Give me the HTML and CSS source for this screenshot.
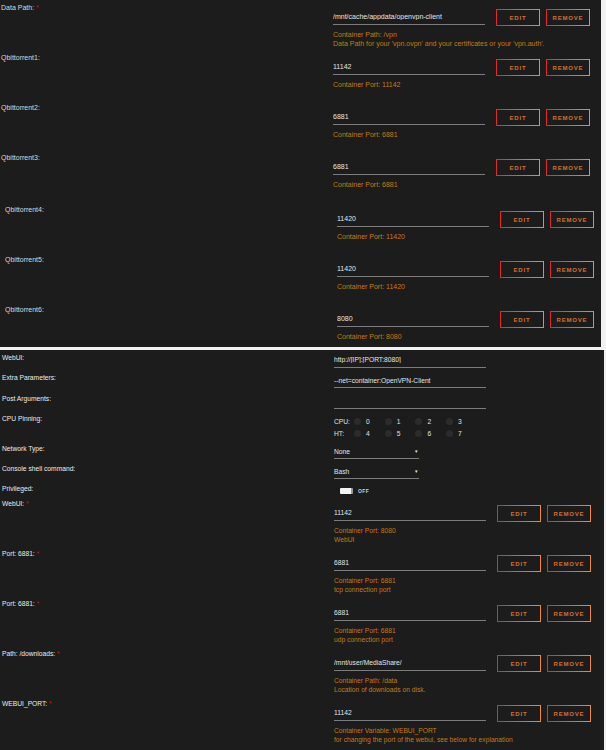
FILE: index.html
```html
<!DOCTYPE html>
<html lang="en">

<head>
    <meta charset="UTF-8">
    <meta name="viewport" content="width=device-width, initial-scale=1.0">
    <title>OpenVPN-Client</title>

    <link rel="stylesheet" href="styles.css">
</head>

<body>
    <!-- path and port mappings -->
    <section class="panel panel-top">
        <div class="row">
            <label class="label">Data Path: <span class="req">*</span></label>
            <div class="field">
                <div class="controls">
                    <input type="text" value="/mnt/cache/appdata/openvpn-client">
                    <button class="btn">EDIT</button>
                    <button class="btn">REMOVE</button>
                </div>
                <p class="desc">Container Path: /vpn<br>Data Path for your 'vpn.ovpn' and your certificates or your 'vpn.auth'.</p>
            </div>
        </div>
        <div class="row">
            <label class="label">Qbittorrent1:</label>
            <div class="field">
                <div class="controls">
                    <input type="text" value="11142">
                    <button class="btn">EDIT</button>
                    <button class="btn">REMOVE</button>
                </div>
                <p class="desc">Container Port: 11142</p>
            </div>
        </div>
        <div class="row">
            <label class="label">Qbittorrent2:</label>
            <div class="field">
                <div class="controls">
                    <input type="text" value="6881">
                    <button class="btn">EDIT</button>
                    <button class="btn">REMOVE</button>
                </div>
                <p class="desc">Container Port: 6881</p>
            </div>
        </div>
        <div class="row">
            <label class="label">Qbittorrent3:</label>
            <div class="field">
                <div class="controls">
                    <input type="text" value="6881">
                    <button class="btn">EDIT</button>
                    <button class="btn">REMOVE</button>
                </div>
                <p class="desc">Container Port: 6881</p>
            </div>
        </div>

        <div class="group">
            <div class="row">
                <label class="label">Qbittorrent4:</label>
                <div class="field">
                    <div class="controls">
                        <input type="text" value="11420">
                        <button class="btn">EDIT</button>
                        <button class="btn">REMOVE</button>
                    </div>
                    <p class="desc">Container Port: 11420</p>
                </div>
            </div>
            <div class="row">
                <label class="label">Qbittorrent5:</label>
                <div class="field">
                    <div class="controls">
                        <input type="text" value="11420">
                        <button class="btn">EDIT</button>
                        <button class="btn">REMOVE</button>
                    </div>
                    <p class="desc">Container Port: 11420</p>
                </div>
            </div>
            <div class="row">
                <label class="label">Qbittorrent6:</label>
                <div class="field">
                    <div class="controls">
                        <input type="text" value="8080">
                        <button class="btn">EDIT</button>
                        <button class="btn">REMOVE</button>
                    </div>
                    <p class="desc">Container Port: 8080</p>
                </div>
            </div>
        </div>
    </section>

    <!-- advanced settings -->
    <section class="panel panel-bottom">
        <div class="row-simple">
            <label class="label">WebUI:</label>
            <input type="text" value="http://[IP]:[PORT:8080]">
        </div>
        <div class="row-simple">
            <label class="label">Extra Parameters:</label>
            <input type="text" value="--net=container:OpenVPN-Client">
        </div>
        <div class="row-simple">
            <label class="label">Post Arguments:</label>
            <input type="text" value="">
        </div>
        <div class="row-simple row-cpu">
            <label class="label">CPU Pinning:</label>
            <div class="cpu">
                <div class="cpu-line">
                    <span class="cpu-name">CPU:</span>
                    <span class="core"><i></i>0</span>
                    <span class="core"><i></i>1</span>
                    <span class="core"><i></i>2</span>
                    <span class="core"><i></i>3</span>
                </div>
                <div class="cpu-line">
                    <span class="cpu-name">HT:</span>
                    <span class="core"><i></i>4</span>
                    <span class="core"><i></i>5</span>
                    <span class="core"><i></i>6</span>
                    <span class="core"><i></i>7</span>
                </div>
            </div>
        </div>
        <div class="row-simple row-short">
            <label class="label">Network Type:</label>
            <div class="select"><span>None</span><span class="arrow">&#9662;</span></div>
        </div>
        <div class="row-simple row-short">
            <label class="label">Console shell command:</label>
            <div class="select"><span>Bash</span><span class="arrow">&#9662;</span></div>
        </div>
        <div class="row-simple row-toggle">
            <label class="label">Privileged:</label>
            <div class="switch"><span class="knob"></span><span class="switch-text">OFF</span></div>
        </div>

        <div class="row">
            <label class="label">WebUI: <span class="req">*</span></label>
            <div class="field">
                <div class="controls">
                    <input type="text" value="11142">
                    <button class="btn">EDIT</button>
                    <button class="btn">REMOVE</button>
                </div>
                <p class="desc">Container Port: 8080<br>WebUI</p>
            </div>
        </div>
        <div class="row">
            <label class="label">Port: 6881: <span class="req">*</span></label>
            <div class="field">
                <div class="controls">
                    <input type="text" value="6881">
                    <button class="btn">EDIT</button>
                    <button class="btn">REMOVE</button>
                </div>
                <p class="desc">Container Port: 6881<br>tcp connection port</p>
            </div>
        </div>
        <div class="row">
            <label class="label">Port: 6881: <span class="req">*</span></label>
            <div class="field">
                <div class="controls">
                    <input type="text" value="6881">
                    <button class="btn">EDIT</button>
                    <button class="btn">REMOVE</button>
                </div>
                <p class="desc">Container Port: 6881<br>udp connection port</p>
            </div>
        </div>
        <div class="row">
            <label class="label">Path: /downloads: <span class="req">*</span></label>
            <div class="field">
                <div class="controls">
                    <input type="text" value="/mnt/user/MediaShare/">
                    <button class="btn">EDIT</button>
                    <button class="btn">REMOVE</button>
                </div>
                <p class="desc">Container Path: /data<br>Location of downloads on disk.</p>
            </div>
        </div>
        <div class="row">
            <label class="label">WEBUI_PORT: <span class="req">*</span></label>
            <div class="field">
                <div class="controls">
                    <input type="text" value="11142">
                    <button class="btn">EDIT</button>
                    <button class="btn">REMOVE</button>
                </div>
                <p class="desc">Container Variable: WEBUI_PORT<br>for changing the port of the webui, see below for explanation</p>
            </div>
        </div>
    </section>
</body>

</html>
```

FILE: styles.css
```css
body {
    margin: 0;
    background-color: #f2f2f2;
    font-family: "Liberation Sans", Arial, sans-serif;
}

.panel {
    background-color: #1c1c1c;
    overflow: hidden;
    box-sizing: border-box;
}

.panel-top {
    width: 601px;
    height: 347px;
    font-size: 7px;
}

.panel-bottom {
    width: 604px;
    height: 400px;
    margin-top: 3px;
    padding-top: 2.5px;
    padding-left: 1px;
    font-size: 6.7px;
}

/* rows with a mapping and edit/remove buttons */
.row {
    display: grid;
    grid-template-columns: 333px 1fr;
    height: 50px;
}

.group {
    margin-top: 2px;
    padding-left: 4px;
}

.label {
    display: block;
    padding-left: 1px;
    margin-top: 3px;
    line-height: 10px;
    color: #dadada;
}

.panel-bottom .label {
    color: #ececec;
}

.req {
    color: #d41010;
}

.controls {
    display: flex;
    align-items: flex-start;
    margin-top: 9px;
}

input {
    width: 152px;
    height: 16px;
    box-sizing: border-box;
    padding: 0;
    border: none;
    border-bottom: 1px solid #7c7c7c;
    background: transparent;
    color: #e4e4e4;
    font-family: inherit;
    font-size: inherit;
    outline: none;
}

.btn {
    width: 44px;
    height: 17px;
    margin-left: 6px;
    padding: 0;
    border: 1px solid transparent;
    background: linear-gradient(#1c1c1c, #1c1c1c) padding-box,
        linear-gradient(90deg, #e3282a, #f48a30) border-box;
    color: #d4702c;
    font-family: "Liberation Sans", Arial, sans-serif;
    font-size: 6px;
    font-weight: bold;
    letter-spacing: 0.8px;
}

input + .btn {
    margin-left: 11px;
}

.desc {
    margin: 4px 0 0;
    line-height: 9px;
    color: #c67a12;
}

/* plain settings rows */
.row-simple {
    display: grid;
    grid-template-columns: 333px 1fr;
    height: 20.5px;
}

.row-simple .label {
    margin-top: 0;
}

.row-simple input {
    height: 15px;
    margin-top: 0;
}

.row-cpu {
    height: 30px;
}

.row-short {
    height: 20px;
}

.row-toggle {
    height: 12px;
}

.cpu {
    padding-top: 1px;
    color: #e0e0e0;
}

.cpu-line {
    display: flex;
    align-items: center;
    height: 12px;
}

.cpu-name {
    width: 20px;
}

.core {
    display: flex;
    align-items: center;
    width: 30.7px;
}

.core i {
    width: 7px;
    height: 7px;
    margin-right: 5px;
    border-radius: 50%;
    background-color: #2c2c2c;
}

.select {
    display: flex;
    justify-content: space-between;
    align-items: center;
    width: 85px;
    height: 15px;
    box-sizing: border-box;
    border-bottom: 1px solid #7c7c7c;
    color: #e4e4e4;
}

.arrow {
    font-size: 5px;
    margin-right: 1px;
}

.switch {
    display: flex;
    align-items: center;
    margin-top: 1.5px;
    margin-left: 6px;
}

.knob {
    width: 11px;
    height: 6px;
    border-radius: 1px;
    border-right: 2px solid #9a9a9a;
    background-color: #f4f4f4;
}

.switch-text {
    margin-left: 5px;
    font-size: 5px;
    font-weight: bold;
    letter-spacing: 0.4px;
    color: #cfcfcf;
}
```
